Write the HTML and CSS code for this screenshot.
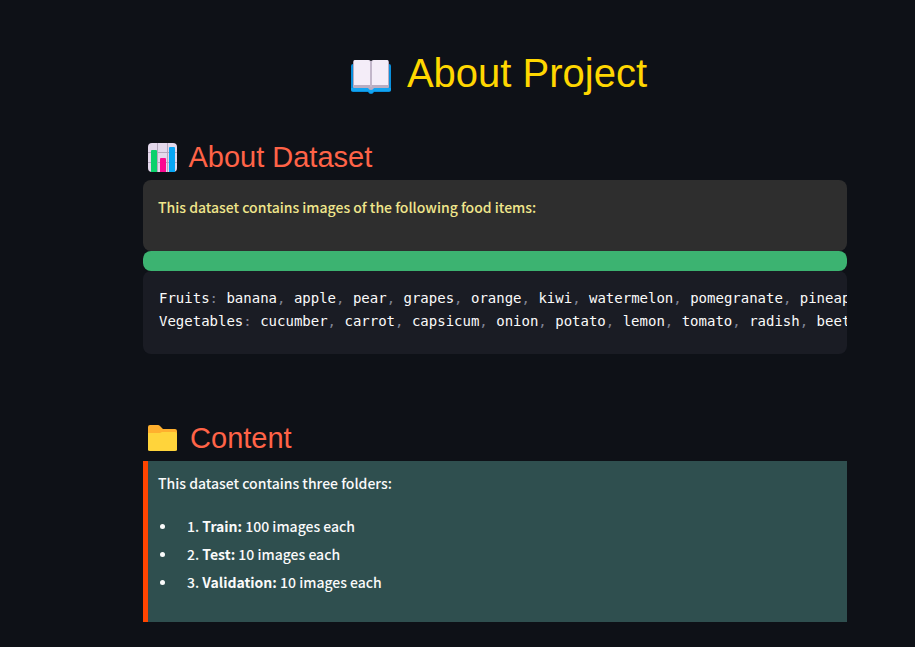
FILE: index.html
```html
<!DOCTYPE html>
<html lang="en">
<head>
<meta charset="utf-8">
<meta name="viewport" content="width=device-width, initial-scale=1">
<title>About Project</title>
<link rel="stylesheet" href="styles.css">
</head>
<body>
<main class="page">
  <h1 class="title">
    <svg class="title-icon" viewBox="0 0 40 36" aria-hidden="true">
      <path fill="#0a8fdc" d="M2 5h36q2 0 2 2v24q0 2-2 2H23q-1 2-3 2t-3-2H2q-2 0-2-2V7q0-2 2-2z"/>
      <path fill="#12a5f2" d="M0 29h40v2q0 1-2 1H23q-1 2-3 2t-3-2H2q-2 0-2-1z"/>
      <path fill="#b9adc2" d="M4 1h14l2 1 2-1h14q2 0 2 2v25q0 1-1 1H23q-1 2-3 2t-3-2H3q-1 0-1-1V3q0-2 2-2z"/>
      <path fill="#f4edf8" d="M4 1h13q2 0 2 2v23H3V2q0-1 1-1zM23 1h13q1 0 1 1v24H21V3q0-2 2-2z"/>
      <path stroke="#c2b6ca" stroke-width="2" d="M20 2v26"/>
    </svg>
    <span>About Project</span>
  </h1>

  <section class="dataset">
    <h2 class="heading">
      <svg class="heading-icon" viewBox="0 0 29 29" aria-hidden="true">
        <rect width="29" height="29" rx="4" fill="#e4d9ec"/>
        <path stroke="#b5a8bd" d="M0 9.500h29M0 19.500h29M9.500 0v29M19.500 0v29"/>
        <path fill="#0bd16c" d="M3 29V8q0-1 1-1h4q1 0 1 1v21z"/>
        <path fill="#fb0a91" d="M12 29V16q0-1 1-1h4q1 0 1 1v13z"/>
        <path fill="#08a6f5" d="M21 29V5q0-1 1-1h4q1 0 1 1v24z"/>
      </svg>
      <span> About Dataset</span>
    </h2>
    <div class="intro"><p>This dataset contains images of the following food items:</p></div>
    <div class="divider"></div>
    <pre class="code"><code>Fruits<i>:</i> banana<i>,</i> apple<i>,</i> pear<i>,</i> grapes<i>,</i> orange<i>,</i> kiwi<i>,</i> watermelon<i>,</i> pomegranate<i>,</i> pineapple
Vegetables<i>:</i> cucumber<i>,</i> carrot<i>,</i> capsicum<i>,</i> onion<i>,</i> potato<i>,</i> lemon<i>,</i> tomato<i>,</i> radish<i>,</i> beetroot</code></pre>
  </section>

  <section class="content">
    <h2 class="heading">
      <svg class="heading-icon" viewBox="0 0 29 29" aria-hidden="true">
        <path fill="#ffb02e" d="M2 1h8q1 0 2 1l3 3h12q2 0 2 2v8H0V3q0-2 2-2z"/>
        <path fill="#ffd43b" d="M0 9h12l2-1h13q2 0 2 2v16q0 1-2 1H2q-2 0-2-1V9z"/>
      </svg>
      <span> Content</span>
    </h2>
    <div class="folders">
      <p>This dataset contains three folders:</p>
      <ul>
        <li><span>1. <strong>Train:</strong> 100 images each</span></li>
        <li><span>2. <strong>Test:</strong> 10 images each</span></li>
        <li><span>3. <strong>Validation:</strong> 10 images each</span></li>
      </ul>
    </div>
  </section>
</main>
</body>
</html>
```
FILE: styles.css
```css
* { box-sizing: border-box; }

body {
  margin: 0;
  background: #0e1117;
  color: #fafafa;
  font: 500 14px/24px "Noto Sans CJK SC", "Noto Sans", sans-serif;
}

h1, h2, p, ul, pre { margin: 0; }

.page { padding: 49px 68px 24px 143px; }

.title {
  display: flex;
  justify-content: center;
  align-items: center;
  gap: 16px;
  padding-left: 8px;
  color: #ffd700;
  font: 40px/48px "Liberation Sans", Arial, sans-serif;
}

.title-icon { width: 40px; height: 36px; margin-top: 8px; }

.dataset { margin-top: 39px; }

.content { margin-top: 63px; }

.heading {
  display: flex;
  align-items: center;
  gap: 5px;
  padding: 3px 5px 5px;
  color: #ff6347;
  font: 29px/36px "Liberation Sans", Arial, sans-serif;
}

.heading span { white-space: pre; }

.heading-icon { width: 29px; height: 29px; }

.intro {
  padding: 15px 15px 32px;
  border-radius: 8px;
  background: #2e2e2e;
  color: #f0e68c;
}

.divider {
  height: 20px;
  border-radius: 8px;
  background: #3cb371;
}

.code {
  overflow: hidden;
  padding: 16px 16px 21px;
  border-radius: 8px;
  background: #1a1c24;
  font: 14px/23px "DejaVu Sans Mono", "Liberation Mono", monospace;
}

.code code { font: inherit; }

.code i { color: #808495; font-style: normal; }

.folders {
  padding: 10px 10px 26px;
  border-left: 5px solid #ff4500;
  background: #2f4f4f;
}

.folders ul {
  margin-top: 17px;
  padding: 0 2px;
  list-style: none;
}

.folders li {
  display: flex;
  align-items: center;
  gap: 22px;
  line-height: 28px;
}

.folders li::before {
  width: 5px;
  height: 5px;
  border-radius: 50%;
  background: #fafafa;
  content: "";
}
```
